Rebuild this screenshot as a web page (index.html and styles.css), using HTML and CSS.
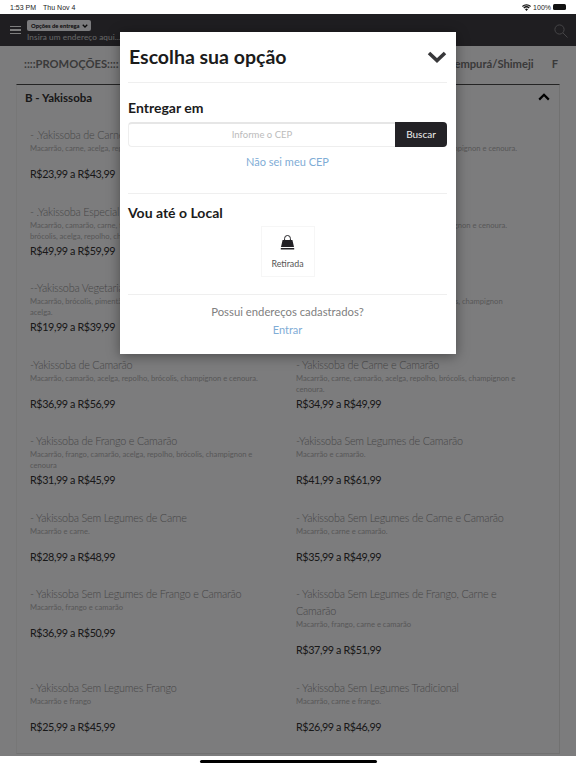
FILE: index.html
```html
<!DOCTYPE html>
<html lang="pt-BR">
<head>
<meta charset="utf-8">
<title>Escolha sua opção</title>
<link rel="stylesheet" href="styles.css">
</head>
<body>
<div class="status">
  <div class="status-left"><span>1:53 PM</span><span>Thu Nov 4</span></div>
  <div class="status-right">
    <svg class="wifi" width="9" height="7" viewBox="0 0 18 14"><path d="M9 14 6 10.6a4.4 4.4 0 0 1 6 0zM4.4 8.9 2.7 7a9.3 9.3 0 0 1 12.6 0l-1.7 1.9a6.8 6.8 0 0 0-9.2 0zM1.6 5.8 0 4a13.3 13.3 0 0 1 18 0l-1.6 1.8a11 11 0 0 0-14.8 0z" fill="#111"/></svg>
    <span>100%</span>
    <span class="battery"></span>
  </div>
</div>
<div class="app">
  <header class="topbar">
    <div class="burger"><i></i><i></i><i></i></div>
    <div class="address">
      <span class="pill">Opções de entrega
        <svg width="6" height="4" viewBox="0 0 12 8"><path d="M1.5 1.5 6 6l4.5-4.5" fill="none" stroke="#111" stroke-width="2.6"/></svg>
      </span>
      <span class="address-text">Insira um endereço aqui...</span>
    </div>
    <svg class="search" width="14" height="14" viewBox="0 0 14 14"><circle cx="5.5" cy="5.5" r="4.6" fill="none" stroke="#8d8c90" stroke-width="1"/><path d="m9 9 4.5 4.5" stroke="#8d8c90" stroke-width="1"/></svg>
  </header>
  <nav class="tabs">
    <span>::::PROMOÇÕES::::</span>
    <span class="tab-push">Tempurá/Shimeji</span>
    <span>F</span>
  </nav>
  <main class="menu">
    <div class="section-head">
      <h2>B - Yakissoba</h2>
      <svg width="12" height="8" viewBox="0 0 12 8"><path d="M1.2 6.6 6 1.8l4.8 4.8" fill="none" stroke="#000" stroke-width="2.2"/></svg>
    </div>
    <div class="grid">
      <article class="item"><h3>- .Yakissoba de Carne</h3><p>Macarrão, carne, acelga, repolho, brócolis, champignon e cenoura.</p><b>R$23,99 a R$43,99</b></article>
      <article class="item"><h3>- Yakissoba de Frango</h3><p>Macarrão, frango, acelga, repolho, brócolis, champignon e cenoura.</p><b>R$23,99 a R$43,99</b></article>
      <article class="item"><h3>- .Yakissoba Especial</h3><p>Macarrão, camarão, carne, frango, lula, polvo,<br>brócolis, acelga, repolho, champignon e cenoura.</p><b>R$49,99 a R$59,99</b></article>
      <article class="item"><h3>- Yakissoba de Lula</h3><p>Macarrão, lula, acelga, repolho, brócolis, champignon e cenoura.</p><b>R$39,99 a R$59,99</b></article>
      <article class="item"><h3>--Yakissoba Vegetariano</h3><p>Macarrão, brócolis, pimentão, cenoura, champignon, repolho e<br>acelga.</p><b>R$19,99 a R$39,99</b></article>
      <article class="item"><h3>- Yakissoba de Frango e Carne</h3><p>Macarrão, frango, carne, acelga, repolho, brócolis, champignon<br>e cenoura.</p><b>R$29,99 a R$49,99</b></article>
      <article class="item"><h3>-Yakissoba de Camarão</h3><p>Macarrão, camarão, acelga, repolho, brócolis, champignon e cenoura.</p><b>R$36,99 a R$56,99</b></article>
      <article class="item"><h3>- Yakissoba de Carne e Camarão</h3><p>Macarrão, carne, camarão, acelga, repolho, brócolis, champignon e<br>cenoura.</p><b>R$34,99 a R$49,99</b></article>
      <article class="item"><h3>- Yakissoba de Frango e Camarão</h3><p>Macarrão, frango, camarão, acelga, repolho, brócolis, champignon e<br>cenoura</p><b>R$31,99 a R$45,99</b></article>
      <article class="item"><h3>-Yakissoba Sem Legumes de Camarão</h3><p>Macarrão e camarão.</p><b>R$41,99 a R$61,99</b></article>
      <article class="item"><h3>- Yakissoba Sem Legumes de Carne</h3><p>Macarrão e carne.</p><b>R$28,99 a R$48,99</b></article>
      <article class="item"><h3>- Yakissoba Sem Legumes de Carne e Camarão</h3><p>Macarrão, carne e camarão.</p><b>R$35,99 a R$49,99</b></article>
      <article class="item"><h3>- Yakissoba Sem Legumes de Frango e Camarão</h3><p>Macarrão, frango e camarão</p><b>R$36,99 a R$50,99</b></article>
      <article class="item"><h3>- Yakissoba Sem Legumes de Frango, Carne e<br>Camarão</h3><p>Macarrão, frango, carne e camarão</p><b>R$37,99 a R$51,99</b></article>
      <article class="item"><h3>- Yakissoba Sem Legumes Frango</h3><p>Macarrão e frango</p><b>R$25,99 a R$45,99</b></article>
      <article class="item"><h3>- Yakissoba Sem Legumes Tradicional</h3><p>Macarrão, carne e frango.</p><b>R$26,99 a R$46,99</b></article>
    </div>
  </main>
  <div class="overlay">
    <section class="modal">
      <div class="modal-head">
        <h1>Escolha sua opção</h1>
        <svg width="20" height="12" viewBox="0 0 20 12"><path d="M2 2l8 7.5L18 2" fill="none" stroke="#38383a" stroke-width="3.6"/></svg>
      </div>
      <div class="block deliver">
        <h2>Entregar em</h2>
        <div class="cep">
          <span class="cep-input">Informe o CEP</span>
          <span class="cep-btn">Buscar</span>
        </div>
        <a class="link">Não sei meu CEP</a>
      </div>
      <div class="block pickup">
        <h2>Vou até o Local</h2>
        <div class="card">
          <svg width="15" height="15" viewBox="0 0 15 15"><path d="M4.6 5V3.4a2.9 2.9 0 0 1 5.8 0V5" fill="none" stroke="#232226" stroke-width="1"/><path d="M2.6 5h9.8l1.6 7H1zM.8 13h13.4v1.5H.8z" fill="#232226"/></svg>
          <span>Retirada</span>
        </div>
      </div>
      <div class="login">
        <span>Possui endereços cadastrados?</span>
        <a class="link">Entrar</a>
      </div>
    </section>
  </div>
</div>
<div class="home"><i></i></div>
</body>
</html>
```

FILE: styles.css
```css
* { box-sizing: border-box; }
html, body { margin: 0; padding: 0; }
body {
  width: 576px;
  height: 768px;
  overflow: hidden;
  background: #fff;
  font-family: "Lato", "Liberation Sans", sans-serif;
  display: flex;
  flex-direction: column;
}
.status {
  height: 14px;
  flex: none;
  padding: 0 10px;
  display: flex;
  justify-content: space-between;
  align-items: center;
  font-family: "Liberation Sans", sans-serif;
  font-size: 7px;
  color: #222;
}
.status-left { display: flex; gap: 7px; }
.status-right { display: flex; align-items: center; gap: 2px; }
.battery { width: 13px; height: 6px; background: #111; border-radius: 1.5px; }
.app {
  position: relative;
  height: 742px;
  flex: none;
  overflow: hidden;
  background: #fdfcff;
  display: flex;
  flex-direction: column;
}
.topbar {
  height: 32px;
  flex: none;
  background: #403e44;
  display: flex;
  align-items: flex-start;
  padding: 6px 8px 0 10px;
}
.burger { width: 11px; display: flex; flex-direction: column; gap: 2px; margin-top: 6px; }
.burger i { display: block; height: 1.4px; background: #fff; }
.address { margin-left: 6px; display: flex; flex-direction: column; align-items: flex-start; }
.pill {
  height: 11px;
  padding: 0 3px 0 4px;
  border-radius: 2px;
  background: #fbfaff;
  color: #111;
  font-size: 5.8px;
  font-weight: 700;
  line-height: 11px;
  display: flex;
  align-items: center;
  gap: 2px;
  white-space: nowrap;
}
.address-text { color: #fff; font-size: 8.2px; line-height: 12px; white-space: nowrap; letter-spacing: .1px; opacity: .75; }
.search { margin-left: auto; margin-top: 4px; }
.tabs {
  height: 37px;
  flex: none;
  padding: 0 18px 2px 24px;
  display: flex;
  align-items: center;
  gap: 18px;
  color: #777;
  font-size: 11.2px;
  font-weight: 700;
  white-space: nowrap;
}
.tab-push { margin-left: auto; }
.menu {
  margin: 1px 16px 2px;
  flex: 1;
  border-top: 1px solid #4a4a4a;
  border-right: 1px solid #e6e6e6;
  border-left: 1px solid #f2f2f2;
  border-bottom: 1px solid #e6e6e6;
  overflow: hidden;
}
.section-head {
  height: 24px;
  padding: 0 9px 0 8px;
  display: flex;
  justify-content: space-between;
  align-items: center;
}
.section-head h2 { margin: 0; font-size: 11.5px; font-weight: 700; color: #333; }
.grid {
  padding: 17px 0 0 13px;
  display: grid;
  grid-template-columns: 266px 266px;
  row-gap: 20.5px;
}
.item { display: flex; flex-direction: column; min-width: 0; }
.item h3 { margin: 0; font-size: 10.8px; line-height: 17px; font-weight: 300; letter-spacing: -.2px; color: #909090; white-space: nowrap; }
.item p { margin: 0; min-height: 22px; font-size: 7.6px; line-height: 11px; color: #b4b4b4; white-space: nowrap; }
.item b { font-size: 10.8px; line-height: 17px; font-weight: 400; letter-spacing: -.4px; color: #333; }
.overlay {
  position: absolute;
  inset: 0;
  background: rgba(0, 0, 0, .51);
  padding: 18px 120px 0;
}
.modal {
  width: 336px;
  height: 322px;
  background: #fff;
  box-shadow: 0 2px 12px rgba(0, 0, 0, .4);
  padding: 0 9px 0 8px;
  display: flex;
  flex-direction: column;
}
.modal-head {
  height: 51px;
  flex: none;
  padding: 0 0 1px 1px;
  border-bottom: 1px solid #efefef;
  display: flex;
  align-items: center;
  justify-content: space-between;
}
.modal-head h1 { margin: 0; font-size: 19.5px; font-weight: 700; color: #1b1b1b; }
.block { border-bottom: 1px solid #efefef; flex: none; }
.block h2 { margin: 0; font-size: 14px; line-height: 18px; font-weight: 700; color: #1b1b1b; }
.deliver { height: 111px; padding-top: 16px; display: flex; flex-direction: column; }
.cep {
  margin-top: 5px;
  height: 25px;
  display: flex;
  border: 1px solid #eee;
  border-top: 2px solid #e6e6e6;
  border-right: 0;
  border-radius: 4px;
}
.cep-input { flex: 1; text-align: center; font-size: 9.5px; line-height: 21px; color: #bbb; }
.cep-btn {
  width: 52px;
  margin: -2px 0 -1px;
  background: #232226;
  border-radius: 0 4px 4px 0;
  color: #eee;
  font-size: 10px;
  line-height: 25px;
  text-align: center;
}
.link { color: #7fadd6; font-size: 11px; line-height: 16px; text-align: center; }
.deliver .link { margin-top: 7px; }
.pickup { height: 101px; padding-top: 10px; display: flex; flex-direction: column; align-items: flex-start; }
.card {
  align-self: center;
  margin-top: 4px;
  width: 54px;
  height: 51px;
  border: 1px solid #f6f6f6;
  display: flex;
  flex-direction: column;
  align-items: center;
  padding-top: 8px;
  gap: 8px;
}
.card span { font-size: 8.8px; line-height: 12px; color: #555; }
.login { display: flex; flex-direction: column; align-items: center; padding-top: 9px; gap: 2px; }
.login span { font-size: 11.3px; line-height: 16px; color: #808080; }
.home { flex: none; height: 12px; padding: 4px 0 0 200px; }
.home i { display: block; width: 177px; height: 3px; border-radius: 2px; background: #000; }
```
